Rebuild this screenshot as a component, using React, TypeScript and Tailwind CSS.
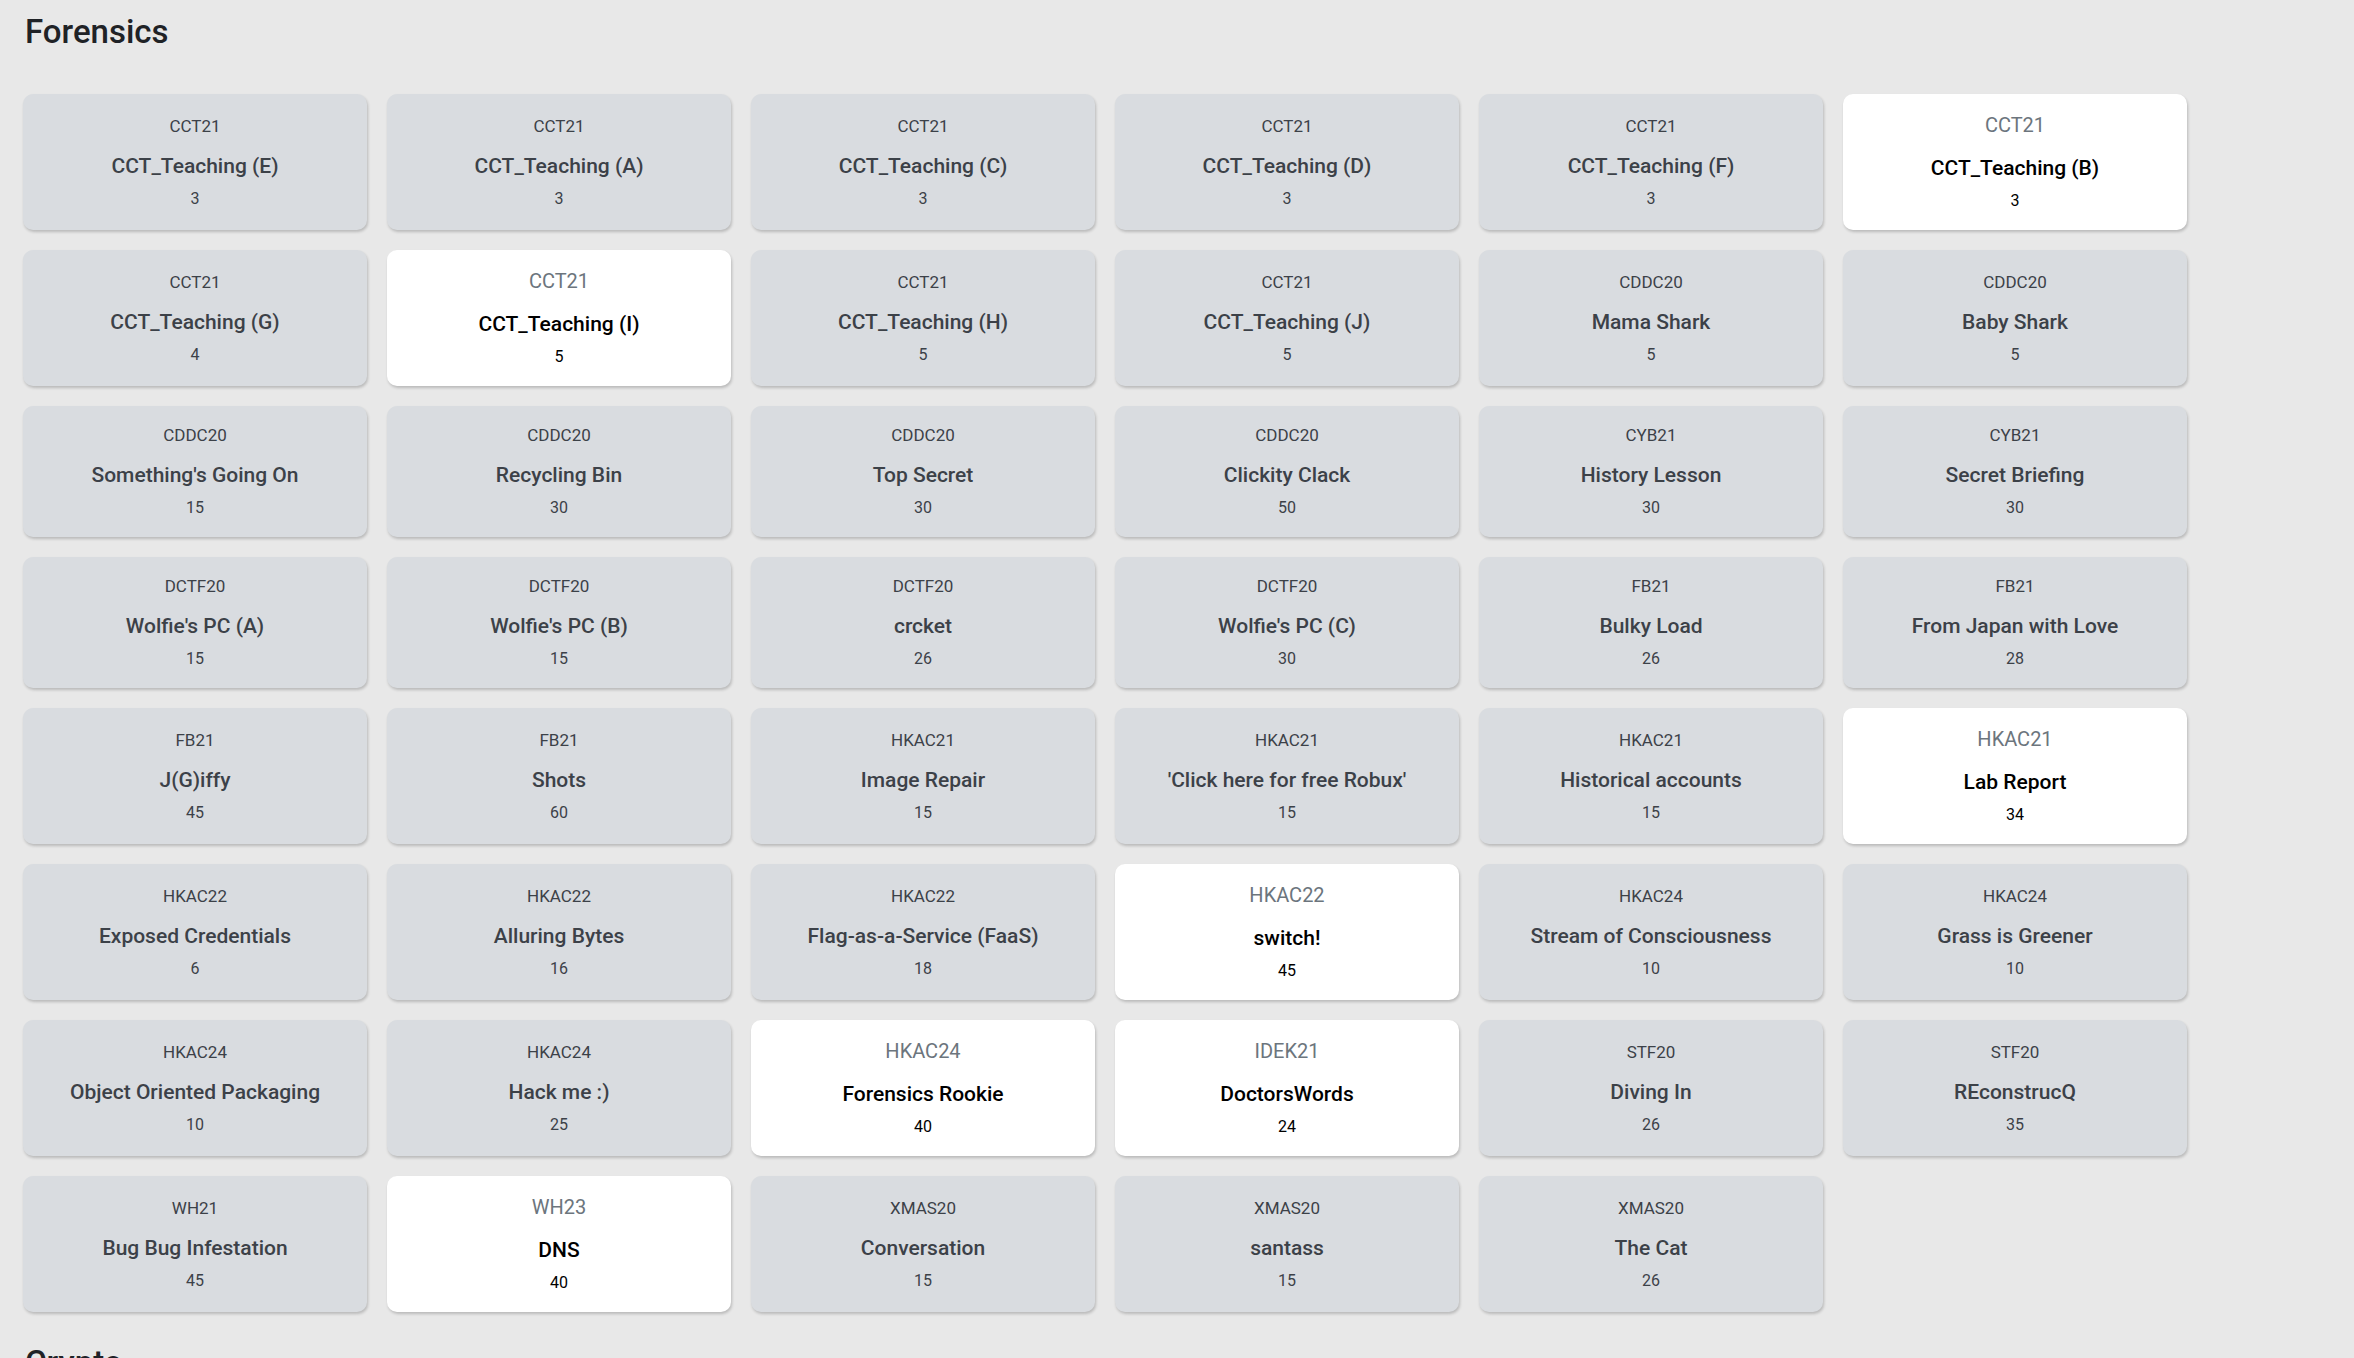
import React from "react";

type Challenge = {
  event: string;
  name: string;
  points: number;
  solved?: boolean;
};

const forensics: Challenge[] = [
  { event: "CCT21", name: "CCT_Teaching (E)", points: 3 },
  { event: "CCT21", name: "CCT_Teaching (A)", points: 3 },
  { event: "CCT21", name: "CCT_Teaching (C)", points: 3 },
  { event: "CCT21", name: "CCT_Teaching (D)", points: 3 },
  { event: "CCT21", name: "CCT_Teaching (F)", points: 3 },
  { event: "CCT21", name: "CCT_Teaching (B)", points: 3, solved: true },
  { event: "CCT21", name: "CCT_Teaching (G)", points: 4 },
  { event: "CCT21", name: "CCT_Teaching (I)", points: 5, solved: true },
  { event: "CCT21", name: "CCT_Teaching (H)", points: 5 },
  { event: "CCT21", name: "CCT_Teaching (J)", points: 5 },
  { event: "CDDC20", name: "Mama Shark", points: 5 },
  { event: "CDDC20", name: "Baby Shark", points: 5 },
  { event: "CDDC20", name: "Something's Going On", points: 15 },
  { event: "CDDC20", name: "Recycling Bin", points: 30 },
  { event: "CDDC20", name: "Top Secret", points: 30 },
  { event: "CDDC20", name: "Clickity Clack", points: 50 },
  { event: "CYB21", name: "History Lesson", points: 30 },
  { event: "CYB21", name: "Secret Briefing", points: 30 },
  { event: "DCTF20", name: "Wolfie's PC (A)", points: 15 },
  { event: "DCTF20", name: "Wolfie's PC (B)", points: 15 },
  { event: "DCTF20", name: "crcket", points: 26 },
  { event: "DCTF20", name: "Wolfie's PC (C)", points: 30 },
  { event: "FB21", name: "Bulky Load", points: 26 },
  { event: "FB21", name: "From Japan with Love", points: 28 },
  { event: "FB21", name: "J(G)iffy", points: 45 },
  { event: "FB21", name: "Shots", points: 60 },
  { event: "HKAC21", name: "Image Repair", points: 15 },
  { event: "HKAC21", name: "'Click here for free Robux'", points: 15 },
  { event: "HKAC21", name: "Historical accounts", points: 15 },
  { event: "HKAC21", name: "Lab Report", points: 34, solved: true },
  { event: "HKAC22", name: "Exposed Credentials", points: 6 },
  { event: "HKAC22", name: "Alluring Bytes", points: 16 },
  { event: "HKAC22", name: "Flag-as-a-Service (FaaS)", points: 18 },
  { event: "HKAC22", name: "switch!", points: 45, solved: true },
  { event: "HKAC24", name: "Stream of Consciousness", points: 10 },
  { event: "HKAC24", name: "Grass is Greener", points: 10 },
  { event: "HKAC24", name: "Object Oriented Packaging", points: 10 },
  { event: "HKAC24", name: "Hack me :)", points: 25 },
  { event: "HKAC24", name: "Forensics Rookie", points: 40, solved: true },
  { event: "IDEK21", name: "DoctorsWords", points: 24, solved: true },
  { event: "STF20", name: "Diving In", points: 26 },
  { event: "STF20", name: "REconstrucQ", points: 35 },
  { event: "WH21", name: "Bug Bug Infestation", points: 45 },
  { event: "WH23", name: "DNS", points: 40, solved: true },
  { event: "XMAS20", name: "Conversation", points: 15 },
  { event: "XMAS20", name: "santass", points: 15 },
  { event: "XMAS20", name: "The Cat", points: 26 },
];

function Card({ c }: { c: Challenge }) {
  if (c.solved) {
    return (
      <div className="flex flex-col items-center justify-center rounded-[10px] bg-white py-[19px] text-center shadow-[1px_2px_3px_rgba(0,0,0,0.2)]">
        <div className="text-[20px] leading-[25px] text-[#6c757d]">{c.event}</div>
        <div className="mt-[18px] text-[21px] font-medium leading-[24px] text-black">{c.name}</div>
        <div className="mt-[11px] text-[16px] leading-[20px] text-black">{c.points}</div>
      </div>
    );
  }
  return (
    <div className="flex flex-col items-center justify-center rounded-[10px] bg-[#d9dce0] py-[19px] text-center text-[#3c4148] shadow-[1px_2px_3px_rgba(0,0,0,0.2)]">
      <div className="text-[17px] leading-[20px]">{c.event}</div>
      <div className="mt-[18px] text-[21px] font-medium leading-[24px]">{c.name}</div>
      <div className="mt-[11px] text-[16px] leading-[20px]">{c.points}</div>
    </div>
  );
}

export default function App() {
  return (
    <div
      className="h-screen overflow-hidden bg-[#e8e8e8] px-[23px] pt-[12px]"
      style={{ fontFamily: "Roboto, 'Noto Sans', sans-serif" }}
    >
      <h2 className="pl-[2px] text-[33px] font-medium leading-[40px] text-[#1f2226]">Forensics</h2>
      <div className="mt-[42px] grid grid-cols-[repeat(6,344px)] gap-5">
        {forensics.map((c, i) => (
          <Card key={i} c={c} />
        ))}
      </div>
      <h2 className="mt-[31px] pl-[2px] text-[33px] font-medium leading-[40px] text-[#1f2226]">Crypto</h2>
    </div>
  );
}
